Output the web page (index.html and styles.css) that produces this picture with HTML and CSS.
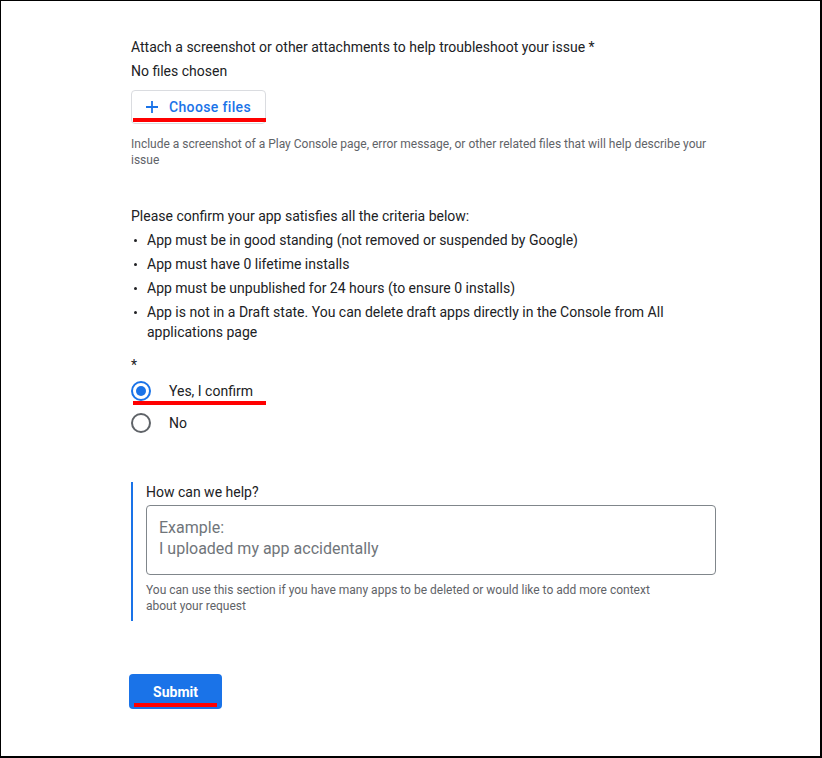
FILE: index.html
```html
<!DOCTYPE html>
<html>
<head>
<meta charset="utf-8">
<link rel="stylesheet" href="styles.css">
</head>
<body>
<div class="frame">
  <div class="content">
    <div class="line">Attach a screenshot or other attachments to help troubleshoot your issue *</div>
    <div class="line">No files chosen</div>
    <div class="choose">
      <svg class="plus" width="12" height="12" viewBox="0 0 12 12"><path d="M6 0V12M0 6H12" stroke="#1a73e8" stroke-width="1.8" fill="none"/></svg>
      <span>Choose files</span>
      <span class="mark mark-choose"></span>
    </div>
    <div class="hint">Include a screenshot of a Play Console page, error message, or other related files that will help describe your issue</div>

    <div class="line confirm">Please confirm your app satisfies all the criteria below:</div>
    <ul class="criteria">
      <li>App must be in good standing (not removed or suspended by Google)</li>
      <li>App must have 0 lifetime installs</li>
      <li>App must be unpublished for 24 hours (to ensure 0 installs)</li>
      <li>App is not in a Draft state. You can delete draft apps directly in the Console from All applications page</li>
    </ul>
    <div class="req">*</div>
    <div class="radio-row">
      <span class="radio checked"></span><span>Yes, I confirm</span>
      <span class="mark mark-yes"></span>
    </div>
    <div class="radio-row">
      <span class="radio"></span><span>No</span>
    </div>

    <div class="help">
      <div class="help-label">How can we help?</div>
      <div class="textarea"><span class="ph">Example:<br>I uploaded my app accidentally</span></div>
      <div class="help-hint">You can use this section if you have many apps to be deleted or would like to add more context about your request</div>
    </div>

    <div class="submit">Submit<span class="mark mark-submit"></span></div>
  </div>
</div>
</body>
</html>
```
FILE: styles.css
```css
html, body { margin: 0; padding: 0; background: #fff; }
.frame {
  box-sizing: border-box;
  width: 822px;
  height: 758px;
  border-top: 1px solid #000;
  border-left: 1px solid #000;
  border-right: 2px solid #000;
  border-bottom: 2px solid #000;
  font-family: Roboto, "Liberation Sans", sans-serif;
  color: #202124;
  font-size: 14px;
  overflow: hidden;
}
.content {
  padding: 34px 0 0 130px;
  width: 585px;
}
.line { line-height: 24px; }
.choose {
  position: relative;
  margin-top: 7px;
  box-sizing: border-box;
  width: 135px;
  height: 34px;
  border: 1px solid #dadce0;
  border-radius: 4px;
  display: flex;
  align-items: center;
  padding-left: 14px;
  gap: 11px;
  color: #1a73e8;
  font-weight: 500;
  letter-spacing: 0.35px;
}
.plus { display: block; }
.mark { position: absolute; background: #ff0000; height: 4px; }
.mark-choose { left: 1px; top: 27px; width: 133px; }
.hint {
  margin-top: 12px;
  font-size: 12px;
  line-height: 16px;
  color: #5f6368;
}
.confirm { margin-top: 36px; }
.criteria {
  list-style: none;
  margin: -2px 0 0 0;
  padding: 0;
}
.criteria li {
  position: relative;
  margin-top: 4px;
  padding-left: 16px;
  line-height: 20px;
}
.criteria li::before {
  content: "";
  position: absolute;
  left: 3px;
  top: 9px;
  width: 3px;
  height: 3px;
  border-radius: 50%;
  background: #202124;
}
.req { margin-top: 13px; line-height: 20px; }
.radio-row {
  position: relative;
  height: 32px;
  display: flex;
  align-items: center;
  gap: 18px;
}
.radio {
  box-sizing: border-box;
  width: 20px;
  height: 20px;
  border: 2px solid #5f6368;
  border-radius: 50%;
  display: flex;
  align-items: center;
  justify-content: center;
}
.radio.checked { border-color: #1a73e8; }
.radio.checked::after {
  content: "";
  width: 10px;
  height: 10px;
  border-radius: 50%;
  background: #1a73e8;
}
.mark-yes { left: 2px; top: 26px; width: 133px; }
.help {
  margin-top: 43px;
  border-left: 2px solid #1a73e8;
  padding: 0 0 7px 13px;
}
.help-label { line-height: 20px; }
.textarea {
  margin-top: 3px;
  box-sizing: border-box;
  height: 70px;
  border: 1px solid #80868b;
  border-radius: 4px;
  padding: 11px 12px;
  font-size: 16px;
  line-height: 21px;
  color: #70757a;
}
.help-hint {
  margin-top: 7px;
  font-size: 12px;
  line-height: 16px;
  color: #5f6368;
  width: 520px;
}
.submit {
  position: relative;
  margin: 53px 0 0 -2px;
  width: 93px;
  height: 35px;
  border-radius: 4px;
  background: #1a73e8;
  color: #fff;
  font-weight: 700;
  display: flex;
  align-items: center;
  justify-content: center;
}
.mark-submit { left: 5px; top: 29px; width: 83px; }
```
